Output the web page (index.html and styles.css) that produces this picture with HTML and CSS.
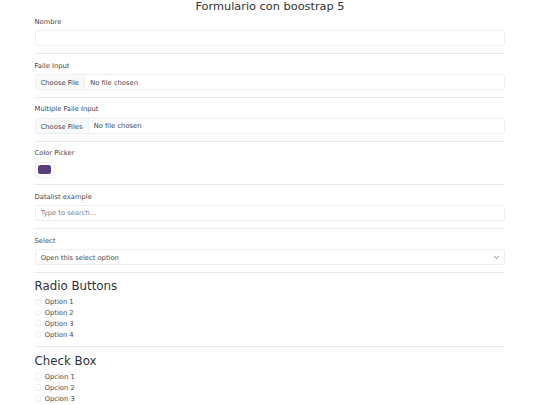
FILE: index.html
```html
<!DOCTYPE html>
<html lang="es">
<head>
<meta charset="utf-8">
<title>Formulario con boostrap 5</title>
<link rel="stylesheet" href="styles.css">
</head>
<body>
<div class="container">
  <h3 class="title">Formulario con boostrap 5</h3>
  <form>
    <label class="form-label" for="nombre">Nombre</label>
    <input class="form-control" type="text" id="nombre">
    <hr>
    <label class="form-label" for="file1">Faile Input</label>
    <input class="form-control" type="file" id="file1">
    <hr>
    <label class="form-label" for="file2">Multiple Faile Input</label>
    <input class="form-control" type="file" id="file2" multiple>
    <hr>
    <label class="form-label" for="color">Color Picker</label>
    <input class="form-control form-control-color" type="color" id="color" value="#563d7c">
    <hr>
    <label class="form-label" for="dl">Datalist example</label>
    <input class="form-control" list="opts" id="dl" placeholder="Type to search...">
    <datalist id="opts"><option value="San Francisco"><option value="New York"></datalist>
    <hr>
    <label class="form-label" for="sel">Select</label>
    <select class="form-select" id="sel">
      <option selected>Open this select option</option>
      <option>One</option>
      <option>Two</option>
    </select>
    <hr>
    <h3 class="section">Radio Buttons</h3>
    <div class="form-check"><input class="form-check-input radio" type="radio" name="r" id="r1"><label for="r1">Option 1</label></div>
    <div class="form-check"><input class="form-check-input radio" type="radio" name="r" id="r2"><label for="r2">Option 2</label></div>
    <div class="form-check"><input class="form-check-input radio" type="radio" name="r" id="r3"><label for="r3">Option 3</label></div>
    <div class="form-check"><input class="form-check-input radio" type="radio" name="r" id="r4"><label for="r4">Option 4</label></div>
    <hr>
    <h3 class="section">Check Box</h3>
    <div class="form-check"><input class="form-check-input check" type="checkbox" id="c1"><label for="c1">Opcion 1</label></div>
    <div class="form-check"><input class="form-check-input check" type="checkbox" id="c2"><label for="c2">Opcion 2</label></div>
    <div class="form-check"><input class="form-check-input check" type="checkbox" id="c3"><label for="c3">Opcion 3</label></div>
  </form>
</div>
</body>
</html>
```

FILE: styles.css
```css
html {
  font-size: 6.75px;
}
* {
  box-sizing: border-box;
}
body {
  margin: 0;
  font-family: "DejaVu Sans", sans-serif;
  font-size: 1rem;
  line-height: 1.5;
  color: #45484b;
  background: #fff;
}
.container {
  width: 481px;
  margin: 0 auto;
  padding: 0 0.75rem;
}
h3 {
  margin: 0 0 0.5rem;
  font-weight: 500;
  line-height: 1.2;
  font-size: 1.75rem;
  color: #2f3235;
}
.title {
  text-align: center;
  font-size: 1.68rem;
}
form {
  display: block;
}
.form-label {
  display: inline-block;
  margin-bottom: 0.5rem;
}
.form-control,
.form-select {
  display: block;
  width: 100%;
  height: 16px;
  padding: 0.375rem 0.75rem;
  font-family: inherit;
  font-size: 1rem;
  line-height: 1.5;
  color: #45484b;
  background-color: #fff;
  border: 1px solid #eceef0;
  border-radius: 2.5px;
  appearance: none;
  outline: none;
  margin: 0;
}
.form-control::placeholder {
  color: #7a8087;
  opacity: 1;
}
.form-control[type="file"] {
  overflow: hidden;
}
.form-control::file-selector-button {
  margin: -0.375rem 0.75rem -0.375rem -0.75rem;
  padding: 0.375rem 0.75rem;
  height: 16px;
  font-family: inherit;
  font-size: 1rem;
  line-height: 1.5;
  color: #45484b;
  background-color: #f8f9fa;
  border: 0 solid #eceef0;
  border-right-width: 1px;
  border-radius: 0;
}
.form-control-color {
  width: 3rem;
  height: 16px;
  padding: 0.375rem;
  cursor: pointer;
}
.form-control-color::-webkit-color-swatch-wrapper {
  padding: 0;
}
.form-control-color::-webkit-color-swatch {
  border: 0;
  border-radius: 2.5px;
}
.form-select {
  padding-right: 2.25rem;
  background-image: url("data:image/svg+xml,%3csvg xmlns='http://www.w3.org/2000/svg' viewBox='0 0 16 16'%3e%3cpath fill='none' stroke='%23343a40' stroke-linecap='round' stroke-linejoin='round' stroke-width='2' d='m2 5 6 6 6-6'/%3e%3c/svg%3e");
  background-repeat: no-repeat;
  background-position: right 0.75rem center;
  background-size: 6.75px 5px;
}
hr {
  margin: 6.62px 0;
  border: 0;
  border-top: 1px solid #e6e7e8;
  height: 0;
}
.form-check {
  display: block;
  min-height: 1.5rem;
  padding-left: 1.5em;
  margin-bottom: 0.125rem;
}
.form-check-input {
  float: left;
  font-size: 6.75px;
  margin: 0.25em 0 0 -1.5em;
  width: 1em;
  height: 1em;
  appearance: none;
  background: #fff;
  border: 1px solid #eceef0;
  padding: 0;
}
.form-check-input.radio {
  border-radius: 50%;
}
.form-check-input.check {
  border-radius: 0.25em;
}
```
